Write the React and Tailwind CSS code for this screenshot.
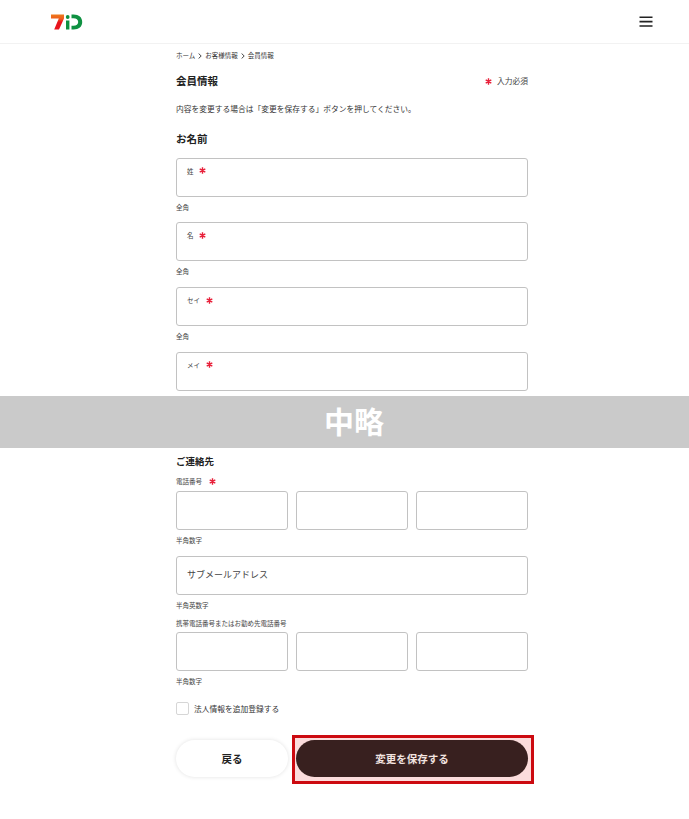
const Req = ({ className = '' }) => (
  <svg width="7" height="7" viewBox="0 0 10 10" className={`shrink-0 ${className}`}>
    <path d="M5 0.5V9.5M1 2.8L9 7.2M9 2.8L1 7.2" stroke="#e8203a" strokeWidth="2" />
  </svg>
);

const Chevron = () => (
  <svg width="4" height="6" viewBox="0 0 4 6" className="shrink-0">
    <path d="M0.6 0.5L3.2 3L0.6 5.5" fill="none" stroke="#333" strokeWidth="0.9" />
  </svg>
);

const Hint = ({ children, className = '' }) => (
  <p className={`text-[6.5px] leading-[10px] text-[#444] ${className}`}>{children}</p>
);

const NameField = ({ label, last }) => (
  <div>
    <div className="h-[39px] rounded-[3px] border border-[#c2c2c2] bg-white pl-[10px] pt-[7px]">
      <div className="flex items-center gap-[5.5px] text-[6.5px] leading-[10px] text-[#444]">
        {label}
        <Req />
      </div>
    </div>
    {!last && <Hint className="mt-[5px] mb-[10.7px]">全角</Hint>}
  </div>
);

const TelRow = () => (
  <div className="grid grid-cols-3 gap-[8px]">
    <div className="h-[39px] rounded-[3px] border border-[#c2c2c2] bg-white" />
    <div className="h-[39px] rounded-[3px] border border-[#c2c2c2] bg-white" />
    <div className="h-[39px] rounded-[3px] border border-[#c2c2c2] bg-white" />
  </div>
);

export default function App() {
  return (
    <div className="h-[819px] overflow-hidden bg-white font-['Noto_Sans_CJK_JP','Noto_Sans',sans-serif] text-[#222]">
      {/* Header */}
      <header className="flex h-[44px] items-center justify-between border-b border-[#f2f2f2] pl-[51px] pr-[36px]">
        <svg width="32" height="16" viewBox="0 0 32 16">
          <defs>
            <linearGradient id="seven" x1="0" y1="0" x2="0" y2="1">
              <stop offset="0" stopColor="#ee7a1c" />
              <stop offset="0.3" stopColor="#ee5a1c" />
              <stop offset="0.5" stopColor="#e8141c" />
            </linearGradient>
          </defs>
          <path d="M0 0.5H13V4.5L8 15.5H3.2L7.8 4.5H0Z" fill="url(#seven)" />
          <circle cx="16.7" cy="3" r="1.9" fill="#0f9142" />
          <rect x="15" y="6.5" width="3.4" height="9" fill="#0f9142" />
          <path d="M20.5 0.5H22.5C28 0.5 31.2 3.4 31.2 8C31.2 12.6 28 15.5 22.5 15.5H20.5V11.8H22.4C25.4 11.8 27.2 10.4 27.2 8C27.2 5.6 25.4 4.2 22.4 4.2H20.5Z" fill="#0f9142" />
        </svg>
        <svg width="14" height="11" viewBox="0 0 14 11">
          <path d="M0.5 1.2H13.5M0.5 5.6H13.5M0.5 10H13.5" stroke="#222" strokeWidth="1.6" />
        </svg>
      </header>

      <main>
        <div className="ml-[176px] w-[352px]">
          <nav className="mt-[6px] flex h-[12px] items-center gap-[3px] text-[6.5px] text-[#333]">
            <span>ホーム</span>
            <Chevron />
            <span>お客様情報</span>
            <Chevron />
            <span>会員情報</span>
          </nav>

          <div className="mt-[12px] flex h-[14px] items-center justify-between">
            <h1 className="text-[10.5px] font-bold">会員情報</h1>
            <div className="flex items-center gap-[5px] text-[7.75px] text-[#444]">
              <Req />
              入力必須
            </div>
          </div>

          <p className="mt-[15px] text-[7.75px] leading-[12px] text-[#333]">
            内容を変更する場合は「変更を保存する」ボタンを押してください。
          </p>

          <h2 className="mt-[17px] text-[10.5px] font-bold leading-[14px]">お名前</h2>

          <div className="mt-[11.7px]">
            <NameField label="姓" />
            <NameField label="名" />
            <NameField label="セイ" />
            <NameField label="メイ" last />
          </div>
        </div>

        {/* Omission band */}
        <div className="mt-[5.2px] flex h-[52px] items-center justify-center bg-[#cacaca] pb-[3px] pl-[19px] text-[30px] font-bold text-white">
          中略
        </div>

        <div className="ml-[176px] w-[352px]">
          <h2 className="mt-[6px] text-[9.5px] font-bold leading-[14px]">ご連絡先</h2>

          <div className="mt-[9px] flex h-[10px] items-center gap-[7px] text-[6.5px] text-[#444]">
            電話番号
            <Req />
          </div>
          <div className="mt-[4px]">
            <TelRow />
          </div>
          <Hint className="mt-[5px]">半角数字</Hint>

          <div className="mt-[11px] flex h-[39px] items-center rounded-[3px] border border-[#c2c2c2] bg-white pb-[1px] pl-[10px] text-[9px] text-[#444]">
            サブメールアドレス
          </div>
          <Hint className="mt-[5px]">半角英数字</Hint>
          <Hint className="mt-[8px]">携帯電話番号またはお勤め先電話番号</Hint>
          <div className="mt-[4px]">
            <TelRow />
          </div>
          <Hint className="mt-[5px]">半角数字</Hint>

          <label className="mt-[16px] flex items-center gap-[5px] text-[7.75px] text-[#333]">
            <span className="size-[13px] rounded-[2px] border border-[#d6d6d6] bg-white" />
            法人情報を追加登録する
          </label>

          {/* Actions */}
          <div className="mt-[25px] flex gap-[8px]">
            <button className="h-[37px] w-[112px] rounded-full bg-white text-[10.5px] font-bold text-[#222] shadow-[0_0_4px_rgba(0,0,0,0.12)]">
              戻る
            </button>
            <div className="-mb-[7px] -ml-[4px] -mr-[6px] -mt-[5px] flex-1 border-[3px] border-[#cc0a10] bg-[#fbdcdc] pb-[4px] pl-[1px] pr-[3px] pt-[2px]">
              <button className="h-[37px] w-full rounded-full bg-[#38201f] text-[10.5px] font-bold text-[#f3e4e0]">
                変更を保存する
              </button>
            </div>
          </div>
        </div>
      </main>
    </div>
  );
}
